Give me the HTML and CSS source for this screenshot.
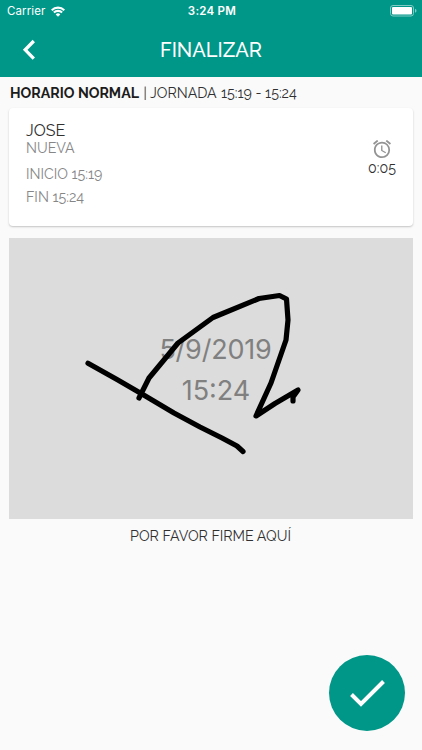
FILE: index.html
```html
<!DOCTYPE html>
<html lang="es">
<head>
<meta charset="utf-8">
<meta name="viewport" content="width=device-width, initial-scale=1">
<title>Finalizar</title>
<link rel="stylesheet" href="styles.css">
</head>
<body>
<header class="header">
  <div class="status">
    <div class="carrier"><span>Carrier</span>
      <svg class="wifi" width="14" height="11" viewBox="0 0 14 11" fill="none" stroke="#fff" stroke-width="2.1"><path d="M.7 4.2a9 9 0 0 1 12.6 0M2.9 6.6a5.8 5.8 0 0 1 8.2 0"/><path d="M4.7 8.4a3.2 3.2 0 0 1 4.6 0L7 10.7z" fill="#fff" stroke="none"/></svg>
    </div>
    <div class="clock">3:24 PM</div>
    <svg class="battery" width="27" height="12" viewBox="0 0 27 12"><rect x=".5" y=".5" width="23" height="10.5" rx="2.5" fill="none" stroke="#80cbc4"/><rect x="2" y="2" width="20" height="7.5" rx="1" fill="#fff"/><path d="M25 3.8q1.5.5 1.5 2T25 7.8z" fill="#80cbc4"/></svg>
  </div>
  <div class="toolbar">
    <svg class="back" width="14" height="22" viewBox="0 0 14 22" fill="none" stroke="#fff" stroke-width="3.3"><path d="M11.8 2 3.2 10.8l8.6 8.8"/></svg>
    <h1 class="title">FINALIZAR</h1>
  </div>
</header>
<main class="content">
  <div class="shift"><b class="kind">HORARIO NORMAL</b><span class="day">| JORNADA</span><span class="range">15:19 - 15:24</span></div>
  <section class="card">
    <div class="details">
      <div class="name">JOSE</div>
      <div class="task">NUEVA</div>
      <div class="start">INICIO 15:19</div>
      <div class="end">FIN 15:24</div>
    </div>
    <div class="duration">
      <svg width="18" height="18" viewBox="2 2 20 20" fill="#939393"><path d="M22 5.72l-4.6-3.86-1.29 1.53 4.6 3.86L22 5.72zM7.88 3.39L6.6 1.86 2 5.71l1.29 1.53 4.59-3.85zM12.5 8H11v6l4.75 2.85.75-1.23-4-2.37V8zM12 4c-4.97 0-9 4.03-9 9s4.02 9 9 9a9 9 0 1 0 0-18zm0 16c-3.87 0-7-3.13-7-7s3.13-7 7-7 7 3.13 7 7-3.13 7-7 7z"/></svg>
      <span class="elapsed">0:05</span>
    </div>
  </section>
  <section class="pad">
    <div class="date">5/9/2019</div>
    <div class="time">15:24</div>
    <svg class="ink" width="404" height="281" viewBox="9 238 404 281"><path d="M88 363.3L117 379.5 142 394 174 413 200 427 222 438 237 446 243 451.5M139 398L149 378 178 343 213 317.5 259 298.5 279.5 295.5 286.5 299 288 320 286 340 271 383 256 416 275 403.5 298 390 293 397V401"/></svg>
  </section>
  <p class="hint">POR FAVOR FIRME AQUÍ</p>
</main>
<button class="fab" aria-label="Confirmar"><svg width="38" height="30" viewBox="0 0 38 30" fill="none" stroke="#fff" stroke-width="4"><path d="M3.5 16.500 13 26 35.500 3.500"/></svg></button>
</body>
</html>
```
FILE: styles.css
```css
* { box-sizing: border-box; }
body {
  margin: 0;
  height: 750px;
  overflow: hidden;
  background: #fafafa;
  color: #303030;
  font-family: Raleway, Lato, sans-serif;
}
.header { height: 77px; background: #009788; color: #fff; }
.status {
  display: grid;
  grid-template-columns: 1fr auto 1fr;
  align-items: center;
  height: 22px;
  padding: 0 5px 0 7px;
  font-family: Inter, sans-serif;
  font-size: 11.5px;
}
.carrier { display: flex; align-items: center; gap: 6px; letter-spacing: .1px; }
.clock { font-weight: 600; letter-spacing: .25px; }
.battery { justify-self: end; }
.toolbar { display: grid; grid-template-columns: 50px 1fr 50px; align-items: center; height: 55px; }
.back { margin-left: 22px; }
.title { margin: 0; text-align: center; font-size: 20px; font-weight: 500; line-height: 26px; letter-spacing: 0; }
.content { padding: 6px 9px 0; }
.shift { display: flex; height: 20px; padding-left: 1px; font-size: 14.2px; line-height: 20px; white-space: nowrap; }
.kind { width: 133.5px; color: #1c1c1c; }
.day { width: 77.5px; }
.card {
  display: flex;
  justify-content: space-between;
  height: 118px;
  margin: 5px 0 12px;
  padding: 13px 17px 0;
  border-radius: 4px;
  background: #fff;
  box-shadow: 0 1px 2px rgba(0, 0, 0, .22);
}
.details { color: #868686; font-size: 14.2px; }
.name { height: 19px; color: #303030; font-size: 16px; line-height: 20px; }
.task { height: 17px; line-height: 17px; }
.start { height: 24px; margin-top: 5px; line-height: 24px; }
.end { height: 24px; line-height: 23px; }
.duration { display: flex; flex-direction: column; align-items: center; width: 28px; padding-top: 19px; font-size: 14.2px; }
.elapsed { margin-top: 1px; line-height: 18px; }
.pad {
  position: relative;
  height: 281px;
  padding-top: 92px;
  background: #dcdcdc;
  color: #808080;
  font-family: Inter, sans-serif;
  font-size: 27px;
  line-height: 40px;
  text-align: center;
}
.date { height: 41px; padding-left: 9px; letter-spacing: -.2px; }
.time { padding-left: 10px; }
.ink { position: absolute; top: 0; left: 0; fill: none; stroke: #000; stroke-width: 5.2; stroke-linecap: round; stroke-linejoin: round; }
.hint { margin: 7px 1px 0 0; font-size: 14.2px; line-height: 20px; text-align: center; }
.fab {
  position: absolute;
  left: 329px;
  top: 655px;
  display: grid;
  place-items: center;
  width: 76px;
  height: 76px;
  padding: 0;
  border: 0;
  border-radius: 50%;
  background: #009788;
}
```
